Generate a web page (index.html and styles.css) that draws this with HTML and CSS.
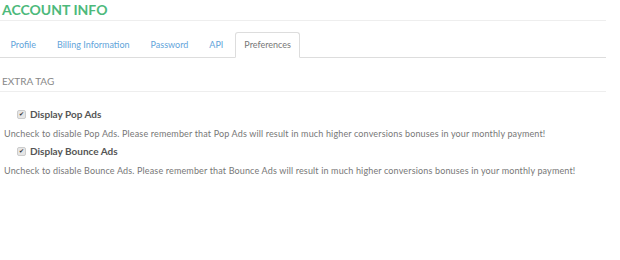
FILE: index.html
```html
<!DOCTYPE html>
<html lang="en">
<head>
    <meta charset="UTF-8">
    <title>Account Info</title>
    <link rel="stylesheet" href="styles.css">
</head>
<body>
    <div class="page">
        <h1 class="title">ACCOUNT INFO</h1>

        <ul class="tabs">
            <li><a href="#">Profile</a></li>
            <li><a href="#">Billing Information</a></li>
            <li><a href="#">Password</a></li>
            <li><a href="#">API</a></li>
            <li class="active"><a href="#">Preferences</a></li>
        </ul>

        <div class="section">
            <h4 class="section-title">EXTRA TAG</h4>

            <div class="option">
                <label><input type="checkbox" checked> Display Pop Ads</label>
                <p class="help">Uncheck to disable Pop Ads. Please remember that Pop Ads will result in much higher conversions bonuses in your monthly payment!</p>
            </div>

            <div class="option">
                <label><input type="checkbox" checked> Display Bounce Ads</label>
                <p class="help">Uncheck to disable Bounce Ads. Please remember that Bounce Ads will result in much higher conversions bonuses in your monthly payment!</p>
            </div>
        </div>
    </div>
</body>
</html>
```

FILE: styles.css
```css
body {
    font-family: Lato, "Liberation Sans", sans-serif;
    margin: 0;
    padding: 0;
    background: #ffffff;
    color: #777777;
}
.page {
    width: 606px;
}
.title {
    margin: 0;
    padding: 0 0 0 2px;
    height: 20px;
    line-height: 20px;
    font-size: 14px;
    font-weight: bold;
    color: #4db97b;
    border-bottom: 1px solid #eeeeee;
}
.tabs {
    list-style: none;
    margin: 11px 0 0 0;
    padding: 0 0 0 1px;
    display: flex;
    border-bottom: 1px solid #dddddd;
}
.tabs li {
    margin: 0 2px -1px 0;
}
.tabs a {
    display: block;
    padding: 0 8.5px;
    height: 24px;
    line-height: 24px;
    font-size: 9px;
    color: #62a4da;
    text-decoration: none;
    border: 1px solid transparent;
    border-radius: 3px 3px 0 0;
}
.tabs .active a {
    color: #777777;
    background: #ffffff;
    border-color: #dddddd #dddddd transparent;
}
.section {
    padding-top: 17px;
}
.section-title {
    margin: 0;
    padding: 0 0 4px 2px;
    font-size: 10px;
    font-weight: normal;
    color: #888888;
    border-bottom: 1px solid #eeeeee;
}
.section-title + .option {
    margin-top: 15px;
}
.option label {
    display: flex;
    align-items: center;
    gap: 4px;
    padding-left: 17px;
    font-size: 10px;
    font-weight: bold;
    color: #555555;
    height: 14px;
}
.option input {
    appearance: none;
    position: relative;
    margin: 0;
    width: 9px;
    height: 9px;
    border: 1px solid #cccccc;
    border-radius: 2px;
    background: #e6e6e6;
}
.option input:checked::after {
    content: "\2714";
    position: absolute;
    left: 1px;
    top: -1px;
    font-size: 6px;
    line-height: 9px;
    color: #333333;
}
.help {
    margin: 7px 0 5px 0;
    padding-left: 4px;
    font-size: 9px;
    letter-spacing: 0.15px;
    color: #777777;
}
```
